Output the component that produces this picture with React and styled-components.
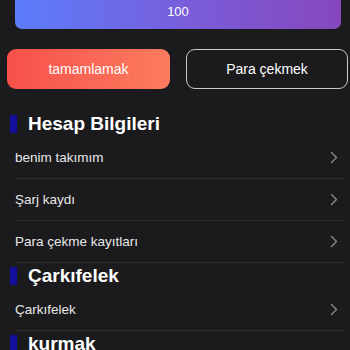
import React from 'react';
import styled, { createGlobalStyle } from 'styled-components';

const GlobalStyle = createGlobalStyle`
  html, body {
    margin: 0;
    padding: 0;
    background: #1b1b1d;
  }
  body {
    font-family: "Liberation Sans", Arial, sans-serif;
    color: #fff;
  }
`;

const Page = styled.div`
  width: 350px;
  height: 350px;
  overflow: hidden;
  background: #1b1b1d;
`;

const Balance = styled.div`
  margin: 0 9px 0 15px;
  height: 29px;
  border-radius: 0 0 7px 7px;
  background: linear-gradient(90deg, #5c7dfb 0%, #7a5cd9 55%, #8647bd 100%);
  display: flex;
  justify-content: center;
  padding-top: 4px;
  box-sizing: border-box;
  font-size: 13px;
  line-height: 16px;
`;

const Actions = styled.div`
  display: grid;
  grid-template-columns: 163px 162px;
  gap: 16px;
  padding: 20px 2px 22px 7px;
`;

const ActionButton = styled.button`
  height: 40px;
  border-radius: 9px;
  font-family: inherit;
  font-size: 14px;
  color: #fff;
  border: ${(p) => (p.primary ? 'none' : '1px solid #c8c8c8')};
  background: ${(p) =>
    p.primary ? 'linear-gradient(90deg, #f6504a 0%, #fc7c5f 100%)' : 'transparent'};
  padding: 0;
`;

const Section = styled.div`
  display: flex;
  flex-direction: column;
`;

const SectionTitle = styled.h2`
  margin: 0;
  display: flex;
  align-items: center;
  gap: 11px;
  padding-left: 10px;
  height: 26px;
  font-size: 19px;
  font-weight: 700;
  &::before {
    content: '';
    width: 7px;
    height: 18px;
    background: #10109a;
  }
`;

const List = styled.div`
  padding: 0 6px 0 15px;
`;

const Row = styled.div`
  height: 41px;
  display: flex;
  align-items: center;
  justify-content: space-between;
  font-size: 13.5px;
  color: #e8e8e8;
  border-bottom: 1px solid #2d2d30;
  padding-right: 6px;
`;

const Chevron = () => (
  <svg width="8" height="13" viewBox="0 0 8 13" fill="none">
    <path d="M1.5 1.5 L6.5 6.5 L1.5 11.5" stroke="#8a8a8e" strokeWidth="1.4" strokeLinecap="round" strokeLinejoin="round" />
  </svg>
);

const sections = [
  { title: 'Hesap Bilgileri', rows: ['benim takımım', 'Şarj kaydı', 'Para çekme kayıtları'] },
  { title: 'Çarkıfelek', rows: ['Çarkıfelek'] },
  { title: 'kurmak', rows: ['Ayarlar'] },
];

export default function App() {
  return (
    <Page>
      <GlobalStyle />
      <Balance>100</Balance>
      <Actions>
        <ActionButton primary>tamamlamak</ActionButton>
        <ActionButton>Para çekmek</ActionButton>
      </Actions>
      {sections.map((s) => (
        <Section key={s.title}>
          <SectionTitle>{s.title}</SectionTitle>
          <List>
            {s.rows.map((r) => (
              <Row key={r}>
                {r}
                <Chevron />
              </Row>
            ))}
          </List>
        </Section>
      ))}
    </Page>
  );
}
